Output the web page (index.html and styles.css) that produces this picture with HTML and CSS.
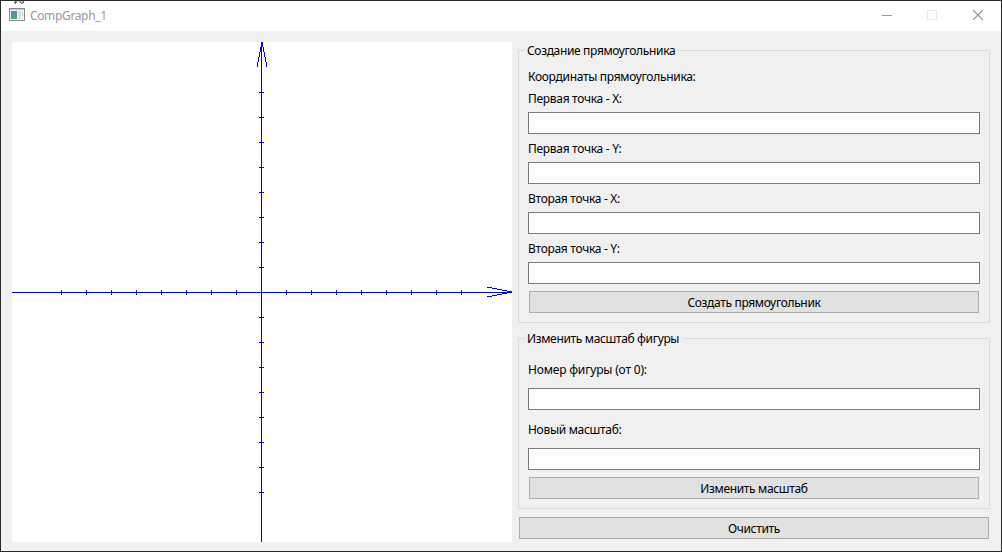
FILE: index.html
```
<!DOCTYPE html>
<html lang="ru">
<head>
<meta charset="utf-8">
<title>CompGraph_1</title>
<link rel="stylesheet" href="styles.css">
</head>
<body>
<div class="window">
  <header class="titlebar">
    <svg class="app-icon" width="16" height="13" viewBox="0 0 16 13" shape-rendering="crispEdges">
      <defs><linearGradient id="pane" x1="0" y1="0" x2="0.6" y2="1"><stop offset="0" stop-color="#5a86b8"/><stop offset="1" stop-color="#46a583"/></linearGradient></defs>
      <rect x=".5" y=".5" width="15" height="12" fill="#f4f4f4" stroke="#858a8e"/>
      <path d="M1 1.5H15" stroke="#c3c8cc"/>
      <rect x="2" y="3" width="6" height="8" fill="url(#pane)"/>
      <rect x="9" y="3" width="3" height="8" fill="#d5dde0"/>
      <rect x="13" y="3" width="1" height="5" fill="#c5d3d0"/>
    </svg>
    <span class="title">CompGraph_1</span>
    <div class="controls">
      <svg width="10" height="10" shape-rendering="crispEdges"><path d="M0 5.5H10" stroke="#999"/></svg>
      <svg width="10" height="10" shape-rendering="crispEdges"><rect x=".5" y=".5" width="9" height="9" fill="none" stroke="#e8e8e8"/></svg>
      <svg class="close" width="10" height="10"><path d="M0 0L10 10M10 0L0 10" stroke="#888" stroke-width="1.1"/></svg>
    </div>
  </header>
  <main class="content">
    <svg class="plot" width="500" height="500" shape-rendering="crispEdges" fill="none" stroke="#0000f0">
      <path d="M0 250.5H500M249.5 0V500"/>
      <path d="M49.5 248v5m25-5v5m25-5v5m25-5v5m25-5v5m25-5v5m25-5v5m25-5v5m50-5v5m25-5v5m25-5v5m25-5v5m25-5v5m25-5v5m25-5v5m25-5v5"/>
      <path d="M247 50.5h5m-5 25h5m-5 25h5m-5 25h5m-5 25h5m-5 25h5m-5 25h5m-5 25h5m-5 50h5m-5 25h5m-5 25h5m-5 25h5m-5 25h5m-5 25h5m-5 25h5m-5 25h5"/>
      <path d="M250.5 0v5M248.5 5v5m3-5v5M247.5 10v5m5-5v5M246.5 15v5m7-5v5M245.5 20v5m9-5v5"/>
      <path d="M495 249.5h5M490 248.5h5m-5 3h5M485 247.5h5m-5 5h5M480 246.5h5m-5 7h5M475 245.5h5m-5 9h5"/>
    </svg>
    <div class="panel">
      <fieldset class="group create">
        <legend>Создание прямоугольника</legend>
        <label class="heading">Координаты прямоугольника:</label>
        <label>Первая точка - X:</label><input>
        <label>Первая точка - Y:</label><input>
        <label>Вторая точка - X:</label><input>
        <label>Вторая точка - Y:</label><input>
        <button>Создать прямоугольник</button>
      </fieldset>
      <fieldset class="group scale">
        <legend>Изменить масштаб фигуры</legend>
        <label class="number">Номер фигуры (от 0):</label><input>
        <label>Новый масштаб:</label><input>
        <button>Изменить масштаб</button>
      </fieldset>
      <button class="clear">Очистить</button>
    </div>
  </main>
  <svg class="cursor" width="12" height="4"><path d="M1 0V3.5L3.5 1.2M5 0L7.5 3.5L9.5 2.5L8.5 0" fill="#fff" stroke="#222"/></svg>
</div>
</body>
</html>
```
FILE: styles.css
```
* { box-sizing: border-box; }
body { margin: 0; font: 12px/16px "Noto Sans", "Open Sans", sans-serif; letter-spacing: -0.3px; color: #000; }
.window { position: relative; width: 1002px; height: 552px; border: 1px solid #2b292b; background: #f0f0f0; overflow: hidden; }
.titlebar { height: 30px; background: #fff; display: flex; align-items: center; padding-left: 8px; color: #999; }
.app-icon { margin-top: -3px; }
.title { margin-left: 5px; line-height: 30px; letter-spacing: -0.36px; }
.controls { margin-left: auto; display: flex; gap: 35px; padding-right: 18px; margin-top: -2px; }
.controls svg { display: block; width: 10px; height: 10px; }
.controls .close { margin-left: 1px; }
.content { display: flex; gap: 6px; padding: 11px; }
.plot { display: block; flex: none; background: #fff; }
.panel { width: 472px; padding-top: 8px; display: flex; flex-direction: column; }
.group { position: relative; margin: 0; border: 1px solid #dcdcdc; display: flex; flex-direction: column; padding: 0 9px; min-width: 0; }
.create { height: 273px; padding-top: 18px; }
.scale { height: 171px; margin-top: 15px; padding-top: 23px; }
legend { position: absolute; left: 6px; top: -9px; padding: 0 3px 0 2px; line-height: 18px; letter-spacing: -0.34px; background: #f0f0f0; white-space: nowrap; }
label { display: block; height: 16px; flex: none; white-space: nowrap; }
.heading { margin-bottom: 6px; }
.number { letter-spacing: -0.18px; }
input { display: block; flex: none; width: 452px; height: 22px; border: 1px solid #7a7a7a; background: #fff; padding: 0; margin: 5px 0 7px; border-radius: 0; }
.scale input { margin: 10px 0 12px; }
button { flex: none; height: 22px; margin: 0 1px; border: 1px solid #adadad; border-radius: 0; background: #e1e1e1; padding: 1px 0 0; font: inherit; line-height: 20px; letter-spacing: -0.34px; color: #000; }
.scale button { margin-top: -5px; }
.clear { margin-top: 8px; }
.cursor { position: absolute; left: 13px; top: -1px; }
```
